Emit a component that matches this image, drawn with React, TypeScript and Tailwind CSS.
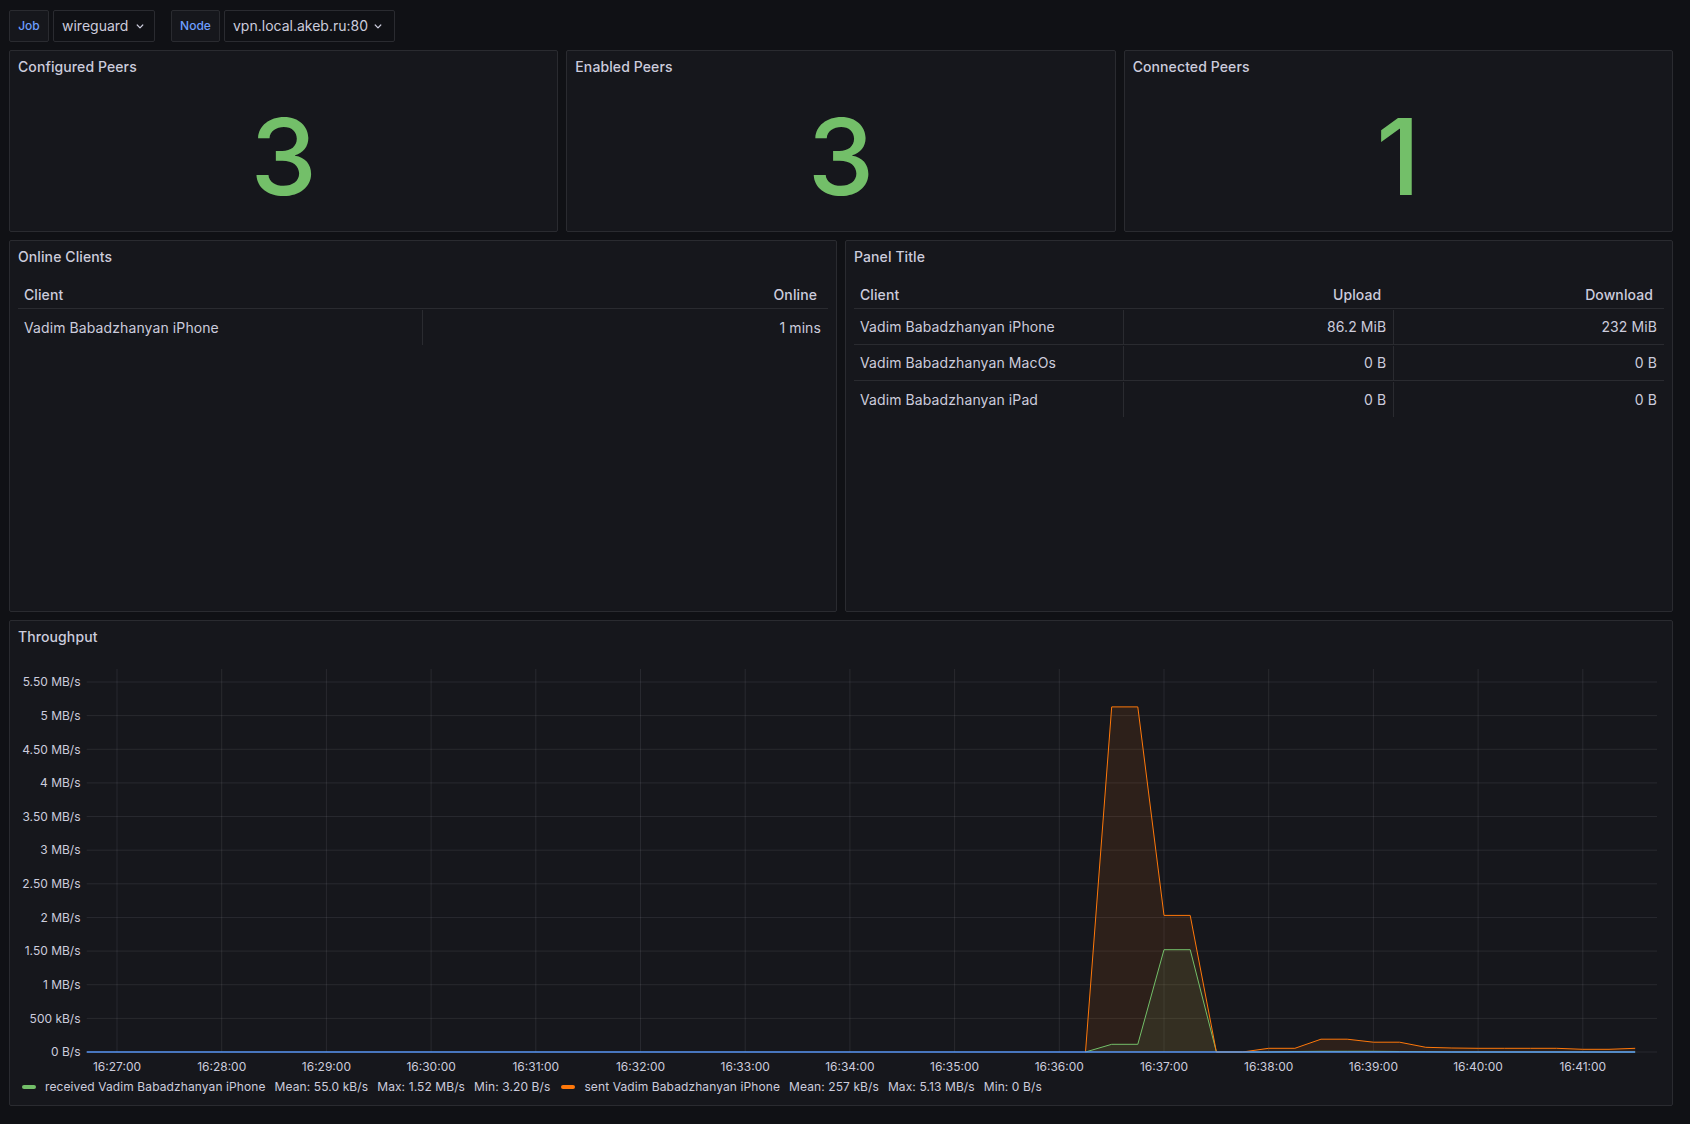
const panel = 'bg-[#16171c] border border-[#2a2b30] rounded-[2px]'
const line = 'border-[#2a2b30]'

function Chevron() {
  return (
    <svg width="8" height="5" viewBox="0 0 8 5" className="text-[#ccccdc]">
      <path d="M1.2 1l2.8 2.8L6.8 1" fill="none" stroke="currentColor" strokeWidth="1.2" strokeLinecap="round" strokeLinejoin="round" />
    </svg>
  )
}

function PanelTitle({ children }: { children: string }) {
  return <div className="h-8 px-2 flex items-center text-sm font-medium tracking-[0.1px] text-[#ccccdc]">{children}</div>
}

function Stat({ title, value }: { title: string; value: string }) {
  return (
    <div className={`${panel} flex flex-col`}>
      <PanelTitle>{title}</PanelTitle>
      <div className="flex-1 flex items-center justify-center">
        <span className="text-[106px] leading-none font-medium text-[#73bf69]">{value}</span>
      </div>
    </div>
  )
}

type Col = { label: string; align: 'left' | 'right' }

function Table({ cols, rows }: { cols: Col[]; rows: string[][] }) {
  return (
    <div className="px-2 text-sm tracking-[0.1px] text-[#ccccdc]">
      <div className={`flex h-9 items-end pb-[3px] border-b ${line} font-medium leading-5`}>
        {cols.map((c) => (
          <div key={c.label} className={c.align === 'left' ? 'flex-1 pl-[6px]' : 'flex-1 text-right pr-[11px]'}>
            {c.label}
          </div>
        ))}
      </div>
      {rows.map((r, i) => (
        <div key={i} className={`flex h-9 pt-px ${i < rows.length - 1 ? `border-b ${line}` : ''}`}>
          {r.map((cell, j) => (
            <div
              key={j}
              className={`flex-1 flex items-center ${cols[j].align === 'left' ? 'pl-[6px]' : 'justify-end pr-[7px]'} ${
                j < r.length - 1 ? `border-r ${line}` : ''
              }`}
            >
              {cell}
            </div>
          ))}
        </div>
      ))}
    </div>
  )
}

// chart geometry (svg coords inside the Throughput panel)
const X = (sec: number) => 107 + (sec / 60) * 104.7
const Y = (v: number) => 399 - (v / 5.5) * 370
const LEFT = 76.7
const RIGHT = 1647

const sent: [number, number][] = [
  [555, 0], [570, 5.13], [585, 5.13], [600, 2.03], [615, 2.03], [630, 0], [645, 0],
  [660, 0.055], [675, 0.055], [690, 0.19], [705, 0.19], [720, 0.145], [735, 0.145],
  [750, 0.07], [765, 0.06], [780, 0.055], [795, 0.055], [810, 0.055], [825, 0.055],
  [840, 0.04], [855, 0.04], [870, 0.055],
]
const received: [number, number][] = [
  [555, 0], [570, 0.114], [585, 0.114], [600, 1.52], [615, 1.52], [630, 0], [645, 0],
  [660, 0], [675, 0.008], [690, 0.01], [705, 0.01], [720, 0.01], [735, 0.008], [750, 0.005],
  [765, 0], [870, 0],
]

const toPath = (pts: [number, number][]) => pts.map(([s, v], i) => `${i ? 'L' : 'M'}${X(s).toFixed(1)} ${Y(v).toFixed(1)}`).join(' ')
const toArea = (pts: [number, number][]) =>
  `${toPath(pts)} L${X(pts[pts.length - 1][0]).toFixed(1)} ${Y(0)} L${X(pts[0][0]).toFixed(1)} ${Y(0)} Z`

const yLabels = ['0 B/s', '500 kB/s', '1 MB/s', '1.50 MB/s', '2 MB/s', '2.50 MB/s', '3 MB/s', '3.50 MB/s', '4 MB/s', '4.50 MB/s', '5 MB/s', '5.50 MB/s']
const xLabels = Array.from({ length: 15 }, (_, k) => `16:${27 + k}:00`)

function Chart() {
  return (
    <svg width="1662" height="423" className="block" fontFamily="Inter, sans-serif" fontSize="12">
      {yLabels.map((l, i) => (
        <g key={l}>
          <line x1={LEFT} x2={RIGHT} y1={Y(i * 0.5)} y2={Y(i * 0.5)} stroke="rgba(204,204,220,0.1)" />
          <text x={70.5} y={Y(i * 0.5) + 4.3} textAnchor="end" fill="#ccccdc">{l}</text>
        </g>
      ))}
      {xLabels.map((l, k) => (
        <g key={l}>
          <line x1={X(k * 60)} x2={X(k * 60)} y1={16} y2={399} stroke="rgba(204,204,220,0.1)" />
          <text x={X(k * 60)} y={418} textAnchor="middle" fill="#ccccdc">{l}</text>
        </g>
      ))}
      <path d={toArea(sent)} fill="rgba(255,120,10,0.1)" />
      <path d={toArea(received)} fill="rgba(115,191,105,0.1)" />
      <path d={toPath(received)} fill="none" stroke="#73bf69" strokeWidth="1" strokeLinejoin="round" />
      <path d={toPath(sent)} fill="none" stroke="#ff780a" strokeWidth="1" strokeLinejoin="round" />
      <line x1={LEFT} x2={X(870)} y1={Y(0)} y2={Y(0)} stroke="#5794f2" strokeWidth="1.5" />
    </svg>
  )
}

function LegendItem({ color, name, stats }: { color: string; name: string; stats: string[] }) {
  return (
    <div className="flex items-center gap-[9px]">
      <span className={`w-[14px] h-[4px] rounded-full ${color}`} />
      <span>{name}</span>
      {stats.map((s) => (
        <span key={s}>{s}</span>
      ))}
    </div>
  )
}

export default function App() {
  return (
    <div className="min-h-screen w-full bg-[#101115] pt-[10px] pl-[9px] pr-[17px] font-['Inter',sans-serif] text-[#ccccdc]">
      {/* variables */}
      <div className="flex items-center h-8 gap-4">
        <div className="flex gap-1">
          <div className="h-8 w-10 flex items-center justify-center rounded-[2px] border border-[#2a2b30] bg-[#16171c] text-xs font-medium text-[#6e9fff]">
            Job
          </div>
          <div className="h-8 w-[102px] flex items-center gap-2 pl-2 rounded-[2px] border border-[#2a2b30] text-sm">
            wireguard
            <Chevron />
          </div>
        </div>
        <div className="flex gap-1">
          <div className="h-8 w-[49px] flex items-center justify-center rounded-[2px] border border-[#2a2b30] bg-[#16171c] text-xs font-medium text-[#6e9fff]">
            Node
          </div>
          <div className="h-8 w-[171px] flex items-center gap-1.5 pl-2 rounded-[2px] border border-[#2a2b30] text-sm">
            vpn.local.akeb.ru:80
            <Chevron />
          </div>
        </div>
      </div>

      <div className="grid grid-cols-3 gap-2 h-[182px] mt-2">
        <Stat title="Configured Peers" value="3" />
        <Stat title="Enabled Peers" value="3" />
        <Stat title="Connected Peers" value="1" />
      </div>

      <div className="grid grid-cols-2 gap-2 h-[372px] mt-2">
        <div className={panel}>
          <PanelTitle>Online Clients</PanelTitle>
          <Table
            cols={[{ label: 'Client', align: 'left' }, { label: 'Online', align: 'right' }]}
            rows={[['Vadim Babadzhanyan iPhone', '1 mins']]}
          />
        </div>
        <div className={panel}>
          <PanelTitle>Panel Title</PanelTitle>
          <Table
            cols={[
              { label: 'Client', align: 'left' },
              { label: 'Upload', align: 'right' },
              { label: 'Download', align: 'right' },
            ]}
            rows={[
              ['Vadim Babadzhanyan iPhone', '86.2 MiB', '232 MiB'],
              ['Vadim Babadzhanyan MacOs', '0 B', '0 B'],
              ['Vadim Babadzhanyan iPad', '0 B', '0 B'],
            ]}
          />
        </div>
      </div>

      <div className={`${panel} h-[486px] mt-2 flex flex-col`}>
        <PanelTitle>Throughput</PanelTitle>
        <Chart />
        <div className="h-[22px] flex items-center gap-[11px] pl-3 text-xs tracking-[0.1px]">
          <LegendItem
            color="bg-[#73bf69]"
            name="received Vadim Babadzhanyan iPhone"
            stats={['Mean: 55.0 kB/s', 'Max: 1.52 MB/s', 'Min: 3.20 B/s']}
          />
          <LegendItem
            color="bg-[#ff780a]"
            name="sent Vadim Babadzhanyan iPhone"
            stats={['Mean: 257 kB/s', 'Max: 5.13 MB/s', 'Min: 0 B/s']}
          />
        </div>
      </div>
    </div>
  )
}
